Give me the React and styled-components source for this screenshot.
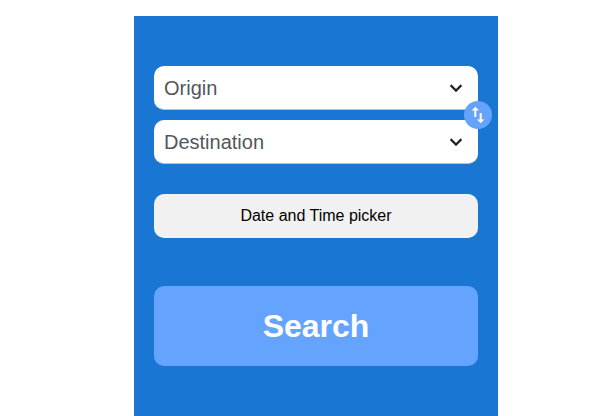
import React from "react";
import styled, { createGlobalStyle } from "styled-components";

const GlobalStyle = createGlobalStyle`
  * { box-sizing: border-box; }
  body { margin: 0; background: #fff; font-family: "Liberation Sans", Arial, sans-serif; overflow: hidden; }
`;

const Page = styled.main`
  height: 100vh;
  padding: 16px 0 0 134px;
`;

const Panel = styled.form`
  display: flex;
  flex-direction: column;
  width: 364px;
  height: 400px;
  padding: 50px 20px 0;
  background: #1976d2;
`;

const Places = styled.div`
  position: relative;
  display: flex;
  flex-direction: column;
  gap: 10px;
`;

const PlaceField = styled.div`
  display: flex;
  align-items: center;
  justify-content: space-between;
  height: 44px;
  padding: 0 10px;
  border-radius: 10px;
  border-bottom: 1px solid #c1c1c1;
  background: #fff;
  color: #50575c;
  font-size: 20px;
  line-height: 24px;
`;

const Chevron = styled.svg`
  width: 24px;
  height: 24px;
  margin-top: 1px;
  fill: #1c1e22;
  stroke: #1c1e22;
  stroke-width: 0.3;
`;

const SwapButton = styled.button`
  position: absolute;
  top: 35px;
  right: -14px;
  display: grid;
  place-items: center;
  width: 28px;
  height: 28px;
  padding: 0;
  border: 0;
  border-radius: 50%;
  background: #64a4ff;
`;

const SwapIcon = styled.svg`
  width: 20px;
  height: 20px;
  fill: #fff;
`;

const DateButton = styled.button`
  height: 44px;
  margin-top: 30px;
  padding: 0;
  border: 0;
  border-radius: 10px;
  background: #f1f1f1;
  color: #000;
  font: 16px "Liberation Sans", Arial, sans-serif;
`;

const SearchButton = styled.button`
  height: 80px;
  margin-top: 48px;
  padding: 0;
  border: 0;
  border-radius: 10px;
  background: #64a4ff;
  color: #fff;
  font: bold 32px "Liberation Sans", Arial, sans-serif;
`;

function Place({ label }) {
  return (
    <PlaceField>
      {label}
      <Chevron viewBox="0 0 24 24">
        <path d="M7.41 8.59 12 13.17l4.59-4.58L18 10l-6 6-6-6z" />
      </Chevron>
    </PlaceField>
  );
}

export default function App() {
  return (
    <Page>
      <GlobalStyle />
      <Panel>
        <Places>
          <Place label="Origin" />
          <Place label="Destination" />
          <SwapButton type="button" aria-label="Swap">
            <SwapIcon viewBox="0 0 20 20">
              <path d="M7.3 1.7 11 5.4H8.3v6.5h-2V5.4H3.6zM12.7 18.3 9 14.6h2.7V8h2v6.6h2.7z" />
            </SwapIcon>
          </SwapButton>
        </Places>
        <DateButton type="button">Date and Time picker</DateButton>
        <SearchButton type="button">Search</SearchButton>
      </Panel>
    </Page>
  );
}
